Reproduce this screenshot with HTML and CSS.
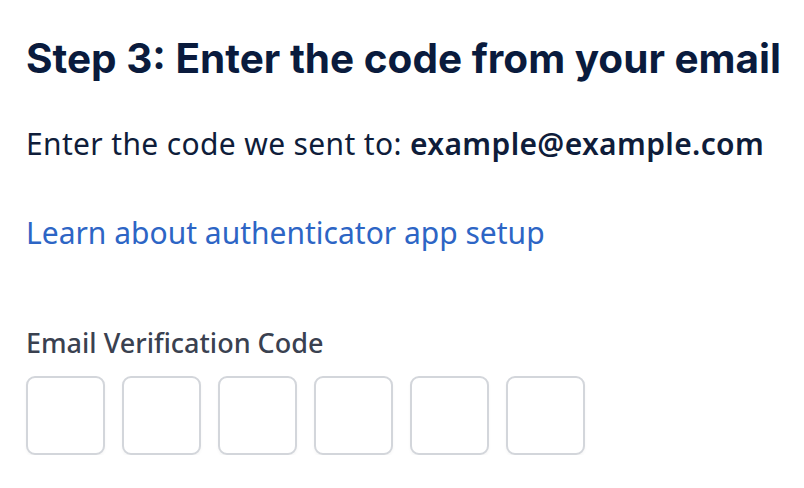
FILE: index.html
```html
<!DOCTYPE html>
<html lang="en">
<head>
    <meta charset="UTF-8">
    <meta name="viewport" content="width=device-width, initial-scale=1.0">
    <title>Verify Email</title>
    <link rel="stylesheet" href="styles.css">
</head>
<body>
    <div class="step">
        <h1 class="step-title">Step 3: Enter the code from your email</h1>
        <p class="step-text">Enter the code we sent to: <strong>example@example.com</strong></p>
        <a class="step-link" href="#">Learn about authenticator app setup</a>

        <div class="code-field">
            <label class="code-label" for="code-1">Email Verification Code</label>
            <div class="code-boxes">
                <input class="code-box" id="code-1" type="text" maxlength="1">
                <input class="code-box" type="text" maxlength="1">
                <input class="code-box" type="text" maxlength="1">
                <input class="code-box" type="text" maxlength="1">
                <input class="code-box" type="text" maxlength="1">
                <input class="code-box" type="text" maxlength="1">
            </div>
        </div>
    </div>
</body>
</html>
```

FILE: styles.css
```css
body {
    margin: 0;
    padding: 0;
    background-color: #ffffff;
    font-family: "Noto Sans", Arial, sans-serif;
}

.step {
    padding: 34px 26px 0 26px;
}

/* Heading */
.step-title {
    margin: 0;
    font-family: Inter, "Liberation Sans", sans-serif;
    font-size: 40.5px;
    font-weight: 700;
    line-height: 50px;
    white-space: nowrap;
    color: #0a1b3d;
}

.step-text {
    margin: 40px 0 0 0;
    font-size: 30px;
    line-height: 40px;
    letter-spacing: 0.35px;
    white-space: nowrap;
    color: #0f1d3a;
}

.step-text strong {
    font-weight: 600;
}

.step-link {
    display: block;
    width: fit-content;
    margin-top: 49px;
    font-size: 30px;
    line-height: 40px;
    color: #2d65c5;
    text-decoration: none;
}

/* Code input */
.code-field {
    margin-top: 73px;
}

.code-label {
    display: block;
    font-size: 27px;
    font-weight: 500;
    line-height: 34px;
    color: #3a4150;
}

.code-boxes {
    display: flex;
    gap: 17px;
    margin-top: 16px;
}

.code-box {
    width: 79px;
    height: 79px;
    box-sizing: border-box;
    border: 2px solid #d3d6db;
    border-radius: 9px;
    box-shadow: 0 2px 3px rgba(0, 0, 0, 0.04);
    background-color: #ffffff;
    padding: 0;
}
```
